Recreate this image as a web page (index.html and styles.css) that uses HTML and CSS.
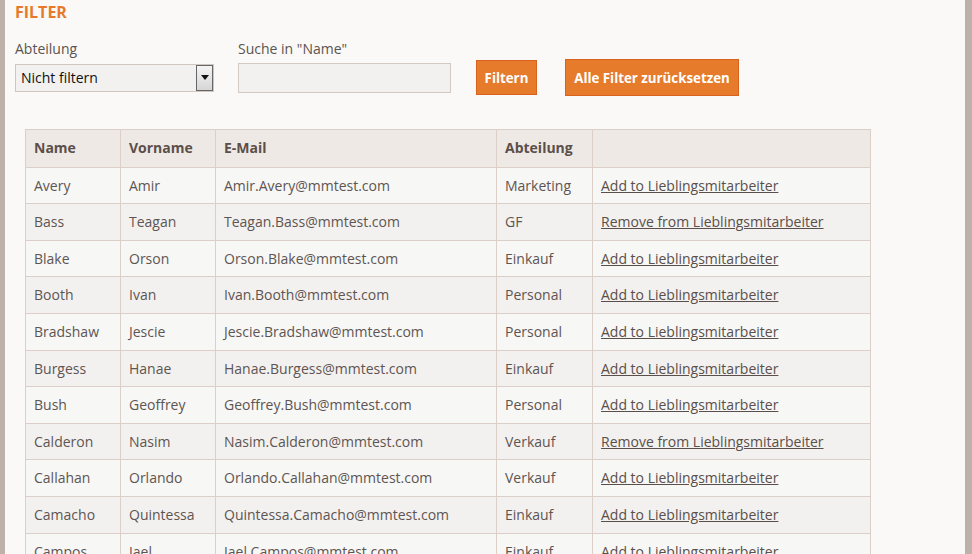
FILE: index.html
```html
<!DOCTYPE html>
<html lang="de">
<head>
<meta charset="utf-8">
<title>Mitarbeiter</title>
<link rel="stylesheet" href="styles.css">
</head>
<body>
<div class="page">
  <h2 class="title">FILTER</h2>
  <form class="filter">
    <label class="lbl lbl-dept" for="dept">Abteilung</label>
    <label class="lbl lbl-name" for="q">Suche in "Name"</label>
    <div class="select ctl-dept">
      <select id="dept"><option>Nicht filtern</option></select>
      <span class="select-arrow"><svg width="8" height="5" viewBox="0 0 8 5"><path d="M0 0h8L4 5z" fill="#111"/></svg></span>
    </div>
    <input id="q" class="text ctl-name" type="text">
    <button type="button" class="btn btn-filter">Filtern</button>
    <button type="button" class="btn btn-reset">Alle Filter zurücksetzen</button>
  </form>
  <table class="grid">
    <colgroup><col class="c1"><col class="c2"><col class="c3"><col class="c4"><col class="c5"></colgroup>
    <thead>
      <tr><th>Name</th><th>Vorname</th><th>E-Mail</th><th>Abteilung</th><th></th></tr>
    </thead>
    <tbody>
      <tr><td>Avery</td><td>Amir</td><td>Amir.Avery@mmtest.com</td><td>Marketing</td><td><a href="#">Add to Lieblingsmitarbeiter</a></td></tr>
      <tr><td>Bass</td><td>Teagan</td><td>Teagan.Bass@mmtest.com</td><td>GF</td><td><a href="#">Remove from Lieblingsmitarbeiter</a></td></tr>
      <tr><td>Blake</td><td>Orson</td><td>Orson.Blake@mmtest.com</td><td>Einkauf</td><td><a href="#">Add to Lieblingsmitarbeiter</a></td></tr>
      <tr><td>Booth</td><td>Ivan</td><td>Ivan.Booth@mmtest.com</td><td>Personal</td><td><a href="#">Add to Lieblingsmitarbeiter</a></td></tr>
      <tr><td>Bradshaw</td><td>Jescie</td><td>Jescie.Bradshaw@mmtest.com</td><td>Personal</td><td><a href="#">Add to Lieblingsmitarbeiter</a></td></tr>
      <tr><td>Burgess</td><td>Hanae</td><td>Hanae.Burgess@mmtest.com</td><td>Einkauf</td><td><a href="#">Add to Lieblingsmitarbeiter</a></td></tr>
      <tr><td>Bush</td><td>Geoffrey</td><td>Geoffrey.Bush@mmtest.com</td><td>Personal</td><td><a href="#">Add to Lieblingsmitarbeiter</a></td></tr>
      <tr><td>Calderon</td><td>Nasim</td><td>Nasim.Calderon@mmtest.com</td><td>Verkauf</td><td><a href="#">Remove from Lieblingsmitarbeiter</a></td></tr>
      <tr><td>Callahan</td><td>Orlando</td><td>Orlando.Callahan@mmtest.com</td><td>Verkauf</td><td><a href="#">Add to Lieblingsmitarbeiter</a></td></tr>
      <tr><td>Camacho</td><td>Quintessa</td><td>Quintessa.Camacho@mmtest.com</td><td>Einkauf</td><td><a href="#">Add to Lieblingsmitarbeiter</a></td></tr>
      <tr><td>Campos</td><td>Jael</td><td>Jael.Campos@mmtest.com</td><td>Einkauf</td><td><a href="#">Add to Lieblingsmitarbeiter</a></td></tr>
      <tr><td>Carver</td><td>Nola</td><td>Nola.Carver@mmtest.com</td><td>Marketing</td><td><a href="#">Add to Lieblingsmitarbeiter</a></td></tr>
    </tbody>
  </table>
</div>
</body>
</html>
```
FILE: styles.css
```css
html, body {
  margin: 0;
  padding: 0;
}
body {
  background: #bdb1a9;
  font-family: "Open Sans", "Liberation Sans", sans-serif;
  font-size: 14px;
  color: #5e5552;
}
.page {
  margin: 0 7px 0 5px;
  background: #faf9f7;
  padding: 1px 10px 40px 10px;
  min-height: 554px;
}
.title {
  margin: 0;
  font-size: 16px;
  line-height: 22px;
  font-weight: 700;
  color: #e8792a;
}
.filter {
  margin-top: 15px;
  display: grid;
  grid-template-columns: 199px 237px 86px 202px;
  grid-template-rows: 21px 37px;
  align-items: center;
}
.lbl {
  line-height: 20px;
  color: #5b5450;
  grid-row: 1;
  align-self: end;
}
.lbl-dept { grid-column: 1; }
.lbl-name { grid-column: 2; margin-left: 24px; }
.ctl-dept { grid-row: 2; grid-column: 1; }
.ctl-name { grid-row: 2; grid-column: 2; }
.btn-filter { grid-row: 2; grid-column: 3; margin-left: 25px; }
.btn-reset { grid-row: 2; grid-column: 4; margin-left: 28px; }

.select {
  position: relative;
  height: 28px;
}
.select select {
  appearance: none;
  -webkit-appearance: none;
  width: 199px;
  height: 28px;
  margin: 0;
  box-sizing: border-box;
  border: 1px solid #cfc6c0;
  background: #f2f1ef;
  font-family: inherit;
  font-size: 14px;
  color: #111;
  padding: 0 0 0 5px;
  border-radius: 0;
}
.select-arrow {
  position: absolute;
  right: 1px;
  top: 1px;
  width: 17px;
  height: 26px;
  box-sizing: border-box;
  border: 1px solid #666;
  background: linear-gradient(#f4f4f4, #d6d6d6);
  display: flex;
  align-items: center;
  justify-content: center;
  pointer-events: none;
}
.text {
  width: 213px;
  height: 30px;
  box-sizing: border-box;
  margin: 0 0 0 24px;
  border: 1px solid #d3cac4;
  background: #f2f1ef;
  font-family: inherit;
  font-size: 14px;
}
.btn {
  background: #e57b2b;
  border: 1px solid #d9621f;
  color: #fff;
  font-family: inherit;
  font-size: 13.3px;
  font-weight: 700;
  padding: 0;
  box-sizing: border-box;
  cursor: pointer;
}
.btn-filter { width: 61px; height: 35px; }
.btn-reset { width: 174px; height: 37px; }

.grid {
  margin: 33px 0 0 10px;
  border-collapse: collapse;
  table-layout: fixed;
  width: 845px;
}
.c1 { width: 95px; }
.c2 { width: 95px; }
.c3 { width: 281px; }
.c4 { width: 96px; }
.c5 { width: 278px; }
.grid th, .grid td {
  border: 1px solid #dbcfc8;
  text-align: left;
  padding: 8px 8px;
  line-height: 19.6px;
  white-space: nowrap;
  overflow: hidden;
}
.grid th {
  background: #efe9e6;
  font-weight: 700;
  color: #5b4f4a;
  padding-top: 8px;
  padding-bottom: 9px;
}
.grid tbody tr:nth-child(odd) td { background: #f7f7f6; }
.grid tbody tr:nth-child(even) td { background: #f3f1ef; }
.grid a {
  color: #5a4f4a;
  text-decoration: underline;
}
```
